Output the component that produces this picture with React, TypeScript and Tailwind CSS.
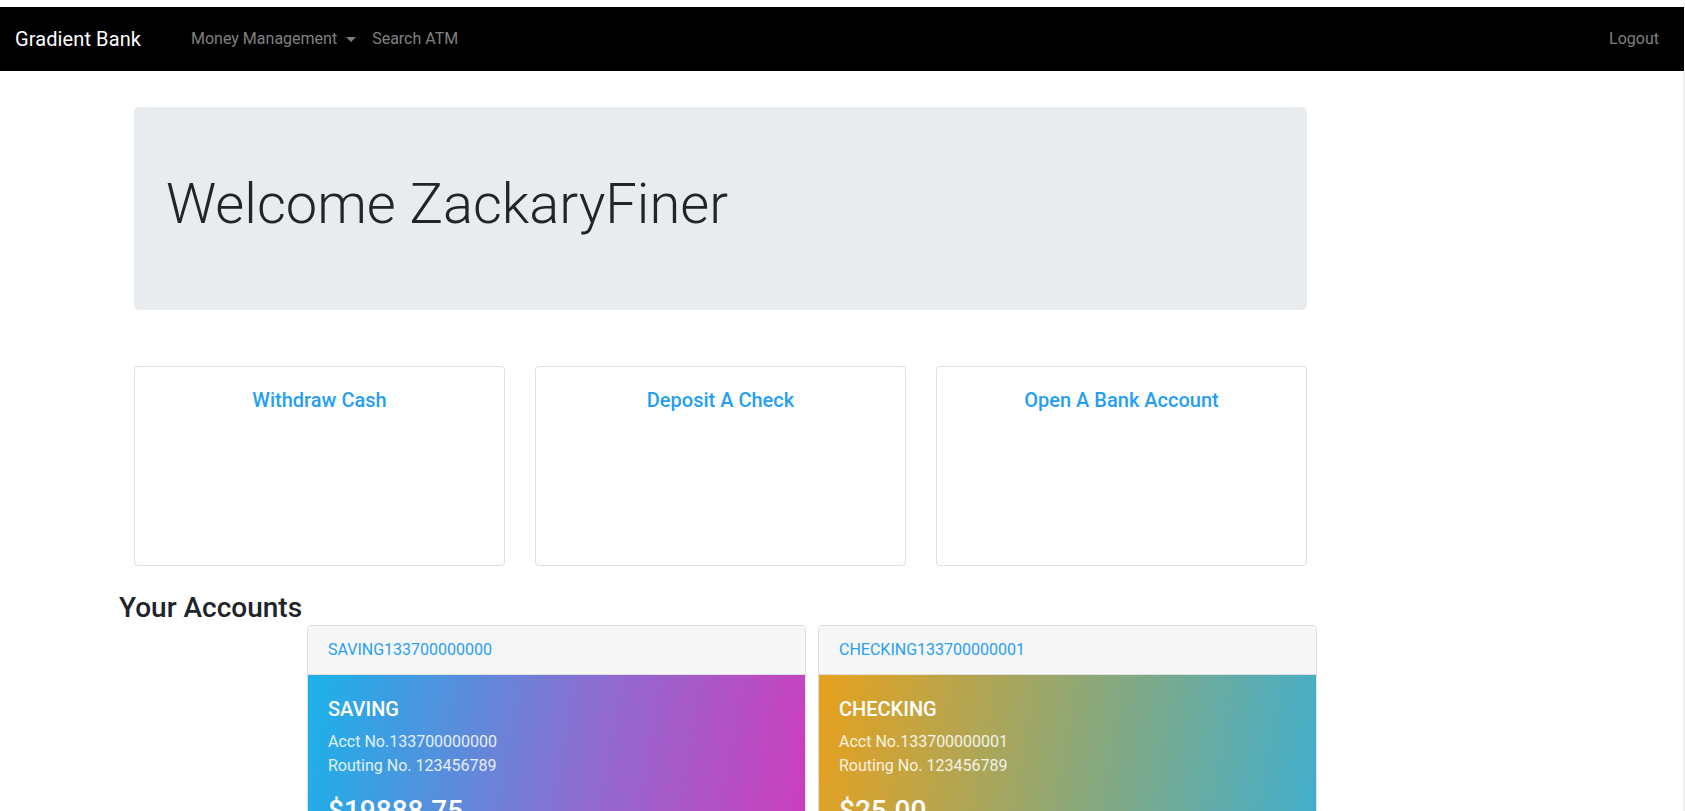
import React from 'react';

const accounts = [
  {
    code: 'SAVING133700000000',
    type: 'SAVING',
    acct: '133700000000',
    routing: '123456789',
    balance: '$19888.75',
    gradient: 'bg-[linear-gradient(100deg,#1bb2e9_0%,#8f6cd0_55%,#d13abc_100%)]',
  },
  {
    code: 'CHECKING133700000001',
    type: 'CHECKING',
    acct: '133700000001',
    routing: '123456789',
    balance: '$25.00',
    gradient: 'bg-[linear-gradient(100deg,#e7a11d_0%,#8ea877_50%,#3cafd3_100%)]',
  },
];

const actions = ['Withdraw Cash', 'Deposit A Check', 'Open A Bank Account'];

export default function App() {
  return (
    <div className="h-[811px] overflow-hidden bg-white font-['Roboto','Liberation_Sans',sans-serif] text-[#212529]">
      <div className="h-[7px]" />

      {/* Top navbar */}
      <nav className="h-16 mr-px bg-black flex items-center pl-[15px] pr-4">
        <span className="text-[20px] leading-[30px] text-white tracking-[0.1px]">Gradient Bank</span>
        <ul className="flex items-center ml-[50px] text-[16px] leading-6 text-[#808080]">
          <li className="flex items-center">
            Money Management
            <span className="ml-[9px] inline-block w-0 h-0 border-t-[5px] border-t-[#808080] border-x-[5px] border-x-transparent" />
          </li>
          <li className="ml-[16px]">Search ATM</li>
        </ul>
        <span className="ml-auto px-2 mr-px text-[16px] leading-6 text-[#808080]">Logout</span>
      </nav>

      <div className="flex h-full">
        <main className="flex-1">
          <div className="ml-[134px] w-[1173px]">
            {/* Welcome jumbotron */}
            <div className="mt-9 h-[203px] rounded-[5px] bg-[#e9ecef] px-8 pt-16">
              <h1 className="text-[56px] font-light leading-[1.2]">Welcome ZackaryFiner</h1>
            </div>

            {/* Quick actions */}
            <div className="mt-[56px] grid grid-cols-3 gap-[30px]">
              {actions.map((a) => (
                <div key={a} className="h-[200px] rounded-[4px] border border-[#dfdfdf] pt-[21px] px-5 text-center">
                  <h5 className="text-[20px] font-medium leading-[1.2] text-[#269ff3]">{a}</h5>
                </div>
              ))}
            </div>
          </div>

          {/* Accounts */}
          <h3 className="ml-[119px] mt-[25px] text-[28px] font-medium leading-[1.2]">Your Accounts</h3>
          <div className="ml-[307px] flex gap-3">
            {accounts.map((acc) => (
              <div key={acc.code} className="w-[499px] rounded-[4px] border border-[#dfdfdf] overflow-hidden">
                <div className="bg-[#f7f7f7] border-b border-[#dfdfdf] px-5 py-3 text-[16px] leading-6 text-[#269ff3]">
                  {acc.code}
                </div>
                <div className={`${acc.gradient} px-5 pt-[22px] pb-5 h-[260px]`}>
                  <h5 className="text-[20px] font-medium leading-[1.2] text-white mb-[9px]">{acc.type}</h5>
                  <p className="text-[16px] leading-6 text-white/85 mb-4">
                    Acct No.{acc.acct}
                    <br />
                    Routing No. {acc.routing}
                  </p>
                  <h3 className="text-[28px] font-medium leading-[1.2] text-white">{acc.balance}</h3>
                </div>
              </div>
            ))}
          </div>
        </main>
        <div className="w-[2px] bg-[#f0f0f0]" />
      </div>
    </div>
  );
}
